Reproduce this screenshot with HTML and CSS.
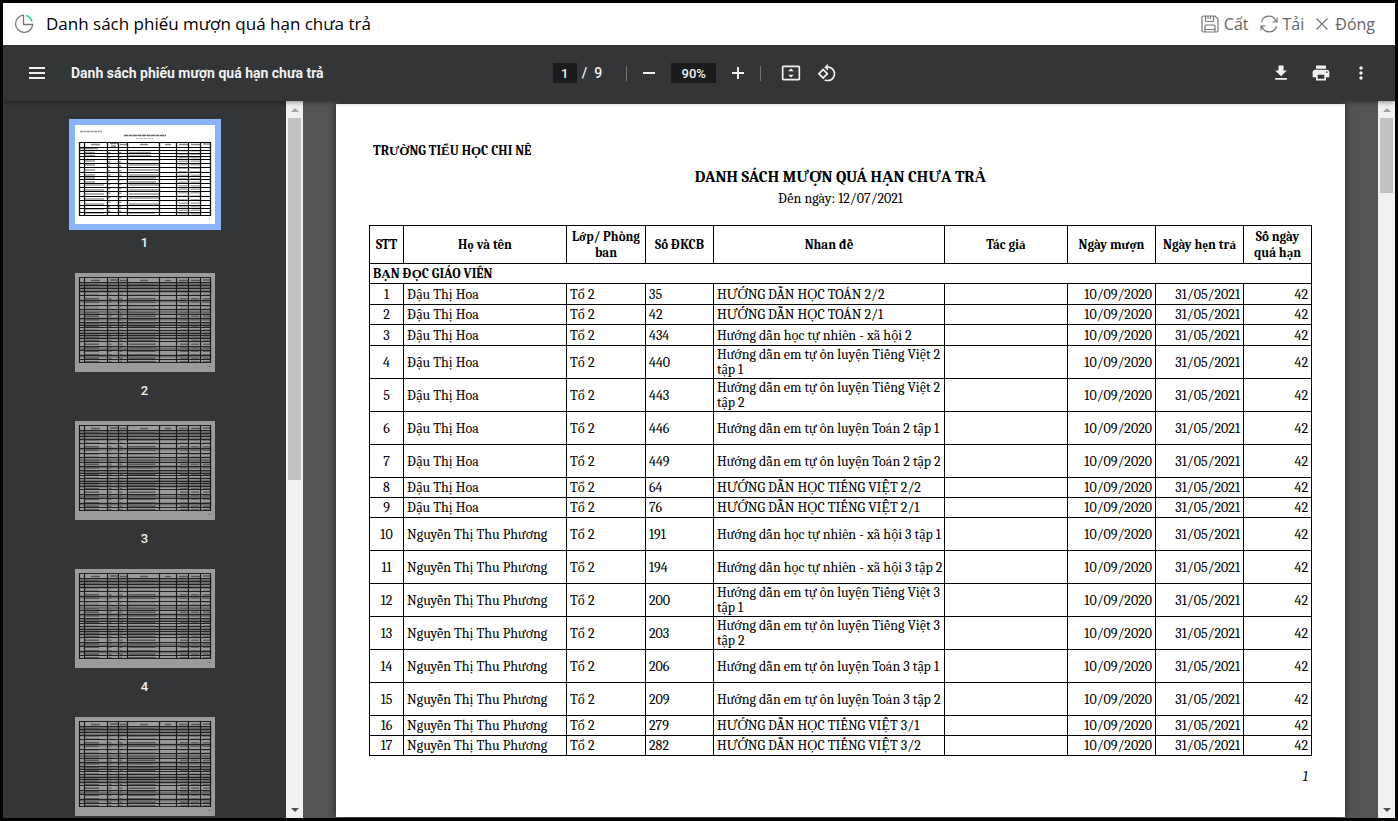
FILE: index.html
```
<!DOCTYPE html>
<html lang="vi">
<head>
    <meta charset="UTF-8">
    <meta name="viewport" content="width=device-width, initial-scale=1.0">
    <title>Danh sách phiếu mượn quá hạn chưa trả</title>
    <link rel="stylesheet" href="styles.css">
</head>
<body>
    <!-- shared page previews for the sidebar -->
    <svg class="defs" aria-hidden="true">
        <symbol id="preview-cols" viewBox="0 0 140 99">
            <path d="M4.500 17v74M9.500 17v74M32.500 17v74M43.500 17v74M52.500 17v74M84.500 17v74M101.500 17v74M113.500 17v74M125.500 17v74M135.500 17v74" stroke="#111" stroke-width="1.300"/>
        </symbol>
        <symbol id="preview-first" viewBox="0 0 140 99">
            <path d="M5 6.500h22" stroke="#999" stroke-width="1.500" stroke-dasharray="3 .5"/>
            <path d="M49 10.500h42" stroke="#666" stroke-width="1.500" stroke-dasharray="4 .5"/>
            <path d="M61 13.500h18" stroke="#bbb" stroke-dasharray="3 1"/>
            <path d="M16 19.500h9M35 18.500h8M36 21h5M45 19.500h7M65 19.500h8M90 19.500h6M104 19.500h9M116 19.500h10M128 19h7M5 23.500h18" stroke="#888" stroke-width="1.500"/>
            <path d="M10 27.500h10M10 30.500h10M10 36h10M10 40h10M10 45h10M10 50h10M10 53h10M10 57h10M10 60h19M10 65h19M10 69h19M10 74h19M10 79h19M10 84h19M10 88h19" stroke="#999" stroke-width="1.500"/>
            <path d="M34 27v63M45 27v63" stroke="#999" stroke-width="3" stroke-dasharray="1.500 3"/>
            <path d="M54 27.500h22M54 30.500h22M54 35h30M54 40h30M54 45h30M54 50h30M54 53h27M54 57h27M54 60h30M54 65h30M54 69h30M54 73h30M54 79h30M54 84h30M54 88h26" stroke="#999" stroke-width="1.600"/>
            <path d="M108 25v65M120 25v65" stroke="#aaa" stroke-width="9" stroke-dasharray="1.500 2"/>
            <path d="M4 17.500h132M4 22.500h132M4 25.500h132M4 28.500h132M4 31.500h132M4 34.500h132M4 38.500h132M4 42.500h132M4 47.500h132M4 51.500h132M4 54.500h132M4 58.500h132M4 62.500h132M4 66.500h132M4 71.500h132M4 75.500h132M4 80.500h132M4 83.500h132M4 87.500h132M4 90.500h132" stroke="#000"/>
            <rect x="134" y="93" width="1" height="1" fill="#888"/>
        </symbol>
        <symbol id="preview-next" viewBox="0 0 140 99">
            <path d="M4 11h132.500M4 14h132.500M4 18h132.500M4 28h132.500M4 39h132.500M4 46h132.500M4 51h132.500M4 60h132.500M4 65h132.500M4 76h132.500M4 83h132.500" stroke="#000" stroke-opacity=".35" stroke-width="3"/>
            <path d="M16 7.500h9M35 7h8M45 7.500h7M65 7.500h8M90 7.500h6M104 7.500h9M116 7.500h10M128 7h7" stroke="#777" stroke-width="1.500"/>
            <path d="M17 11v79" stroke="#777" stroke-width="14" stroke-dasharray="1.500 2"/>
            <path d="M35 11v79M46 11v79" stroke="#888" stroke-width="3" stroke-dasharray="1.500 2"/>
            <path d="M67 11v79" stroke="#777" stroke-width="27" stroke-dasharray="1.500 2"/>
            <path d="M109 11v79M120 11v79M132 11v79" stroke="#888" stroke-width="8" stroke-dasharray="1.500 2"/>
            <path d="M4 4.500h132M4 9.500h132M4 12.500h132M4 15.500h132M4 18.500h132M4 22.500h132M4 27.500h132M4 32.500h132M4 36.500h132M4 41.500h132M4 45.500h132M4 49.500h132M4 52.500h132M4 54.500h132M4 57.500h132M4 60.500h132M4 62.500h132M4 65.500h132M4 68.500h132M4 73.500h132M4 77.500h132M4 82.500h132M4 86.500h132M4 89.500h132" stroke="#111"/>
            <path d="M4.500 4v86M9.500 4v86M32.500 4v86M43.500 4v86M52.500 4v86M84.500 4v86M101.500 4v86M113.500 4v86M125.500 4v86M135.500 4v86" stroke="#000" stroke-width="1.200"/>
            <rect x="134" y="93" width="1" height="1" fill="#444"/>
        </symbol>
    </svg>

    <header class="titlebar">
        <svg class="report-icon" viewBox="0 0 20 20" width="20" height="20" fill="none" stroke-width="1.300">
            <path d="M9.500 1.200a8.600 8.600 0 1 0 9.200 9.300H9.500z" stroke="#777"/>
            <path d="M12 1.500a8 8 0 0 1 6 6" stroke="#2fd080" stroke-width="1.600"/>
        </svg>
        <h1>Danh sách phiếu mượn quá hạn chưa trả</h1>
        <div class="actions">
            <button type="button">
                <svg viewBox="0 0 18 18" width="18" height="18" fill="none" stroke="#777" stroke-width="1.200"><path d="M1 2.500Q1 1 2.500 1H14l3 3v11.500q0 1.500-1.500 1.500h-13Q1 17 1 15.500zM4.500 1v4.500q0 1 1 1h6q1 0 1-1V1M9.500 1v3M7 1v3M4 17v-6q0-1 1-1h8q1 0 1 1v6M4 14.500h10"/></svg>
                Cất
            </button>
            <button type="button">
                <svg viewBox="0 0 18 18" width="18" height="18" fill="none" stroke="#777" stroke-width="1.200"><path d="M1.500 7A7.500 7.500 0 0 1 16 6.500M17 2.500v4.500h-4.500M16.500 11A7.500 7.500 0 0 1 2 11.500M1 15.500V11h4.500"/></svg>
                Tải
            </button>
            <button type="button">
                <svg class="close-icon" viewBox="0 0 14 14" width="14" height="14" fill="none" stroke="#777" stroke-width="1.200"><path d="M1.500 1.500l11 11M12.500 1.500l-11 11"/></svg>
                Đóng
            </button>
        </div>
    </header>

    <div class="toolbar">
        <div class="toolbar-start">
            <button type="button" class="icon-btn" aria-label="Menu">
                <svg viewBox="0 0 20 20"><path d="M2 4h16v2H2zM2 9h16v2H2zM2 14h16v2H2z"/></svg>
            </button>
            <h2>Danh sách phiếu mượn quá hạn chưa trả</h2>
        </div>
        <div class="toolbar-center">
            <input class="page-input" type="text" value="1" aria-label="Trang">
            <span class="page-total">/&nbsp; 9</span>
            <span class="divider"></span>
            <button type="button" class="icon-btn" aria-label="Thu nhỏ">
                <svg viewBox="0 0 20 20"><path d="M4 9h12v2H4z"/></svg>
            </button>
            <input class="zoom-input" type="text" value="90%" aria-label="Thu phóng">
            <button type="button" class="icon-btn" aria-label="Phóng to">
                <svg viewBox="0 0 20 20"><path d="M9 4h2v5h5v2h-5v5H9v-5H4V9h5z"/></svg>
            </button>
            <span class="divider"></span>
            <button type="button" class="icon-btn fit" aria-label="Vừa với trang">
                <svg viewBox="0 0 24 24"><path d="M21 3H3c-1.100 0-2 .9-2 2v14c0 1.100.9 2 2 2h18c1.100 0 2-.9 2-2V5c0-1.100-.9-2-2-2zm0 16H3V5h18v14zM12 6.500L8.500 10h7L12 6.500zM12 17.500l3.500-3.500h-7l3.500 3.500z"/></svg>
            </button>
            <button type="button" class="icon-btn" aria-label="Xoay">
                <svg viewBox="0 0 24 24"><path d="M7.340 6.410L.86 12.900l6.490 6.480 6.490-6.480-6.500-6.490zM3.690 12.900l3.660-3.660L11 12.900l-3.660 3.660-3.650-3.660zm15.670-6.260C17.610 4.880 15.300 4 13 4V.76L8.760 5 13 9.240V6c1.790 0 3.580.68 4.950 2.050 2.730 2.730 2.730 7.170 0 9.900C16.580 19.320 14.790 20 13 20c-.97 0-1.940-.21-2.840-.61l-1.490 1.490C10.020 21.620 11.510 22 13 22c2.300 0 4.610-.88 6.360-2.640 3.520-3.510 3.520-9.210 0-12.720z"/></svg>
            </button>
        </div>
        <div class="toolbar-end">
            <button type="button" class="icon-btn" aria-label="Tải xuống">
                <svg viewBox="0 0 24 24"><path d="M19 9h-4V3H9v6H5l7 7 7-7zM5 18v2h14v-2H5z"/></svg>
            </button>
            <button type="button" class="icon-btn" aria-label="In">
                <svg viewBox="0 0 24 24"><path d="M19 8H5c-1.660 0-3 1.340-3 3v6h4v4h12v-4h4v-6c0-1.660-1.340-3-3-3zm-3 11H8v-5h8v5zm3-7c-.55 0-1-.45-1-1s.45-1 1-1 1 .45 1 1-.45 1-1 1zm-1-9H6v4h12V3z"/></svg>
            </button>
            <button type="button" class="icon-btn" aria-label="Thêm">
                <svg viewBox="0 0 24 24"><path d="M12 8c1.100 0 2-.9 2-2s-.9-2-2-2-2 .9-2 2 .9 2 2 2zm0 2c-1.100 0-2 .9-2 2s.9 2 2 2 2-.9 2-2-.9-2-2-2zm0 6c-1.100 0-2 .9-2 2s.9 2 2 2 2-.9 2-2-.9-2-2-2z"/></svg>
            </button>
        </div>
    </div>

    <div class="viewer">
        <nav class="thumbs">
            <a href="#p1" class="thumb active">
                <svg viewBox="0 0 140 99"><use href="#preview-first"/><use href="#preview-cols"/></svg>
                <span>1</span>
            </a>
            <a href="#p2" class="thumb">
                <svg viewBox="0 0 140 99"><use href="#preview-next"/></svg>
                <span>2</span>
            </a>
            <a href="#p3" class="thumb">
                <svg viewBox="0 0 140 99"><use href="#preview-next"/></svg>
                <span>3</span>
            </a>
            <a href="#p4" class="thumb">
                <svg viewBox="0 0 140 99"><use href="#preview-next"/></svg>
                <span>4</span>
            </a>
            <a href="#p5" class="thumb" aria-label="5">
                <svg viewBox="0 0 140 99"><use href="#preview-next"/></svg>
            </a>
        </nav>
        <div class="scrollbar">
            <span class="arrow up"></span>
            <span class="track"><span class="handle"></span></span>
            <span class="arrow down"></span>
        </div>

        <main class="canvas">
            <article class="page" id="p1">
                <p class="school">TRƯỜNG TIỂU HỌC CHI NÊ</p>
                <h3>DANH SÁCH MƯỢN QUÁ HẠN CHƯA TRẢ</h3>
                <p class="date">Đến ngày: 12/07/2021</p>
                <table>
                    <colgroup>
                        <col class="c-stt"><col class="c-name"><col class="c-class"><col class="c-code"><col class="c-title"><col class="c-author"><col class="c-date"><col class="c-date"><col class="c-days">
                    </colgroup>
                    <thead>
                        <tr><th>STT</th><th>Họ và tên</th><th>Lớp/ Phòng ban</th><th>Số ĐKCB</th><th>Nhan đề</th><th>Tác giả</th><th>Ngày mượn</th><th>Ngày hẹn trả</th><th>Số ngày quá hạn</th></tr>
                    </thead>
                    <tbody>
                        <tr class="group"><th colspan="9">BẠN ĐỌC GIÁO VIÊN</th></tr>
                        <tr class="mid"><td>1</td><td>Đậu Thị Hoa</td><td>Tổ 2</td><td>35</td><td>HƯỚNG DẪN HỌC TOÁN 2/2</td><td></td><td>10/09/2020</td><td>31/05/2021</td><td>42</td></tr>
                        <tr><td>2</td><td>Đậu Thị Hoa</td><td>Tổ 2</td><td>42</td><td>HƯỚNG DẪN HỌC TOÁN 2/1</td><td></td><td>10/09/2020</td><td>31/05/2021</td><td>42</td></tr>
                        <tr class="mid"><td>3</td><td>Đậu Thị Hoa</td><td>Tổ 2</td><td>434</td><td>Hướng dẫn học tự nhiên - xã hội 2</td><td></td><td>10/09/2020</td><td>31/05/2021</td><td>42</td></tr>
                        <tr class="tall"><td>4</td><td>Đậu Thị Hoa</td><td>Tổ 2</td><td>440</td><td>Hướng dẫn em tự ôn luyện Tiếng Việt 2<br>tập 1</td><td></td><td>10/09/2020</td><td>31/05/2021</td><td>42</td></tr>
                        <tr class="tall"><td>5</td><td>Đậu Thị Hoa</td><td>Tổ 2</td><td>443</td><td>Hướng dẫn em tự ôn luyện Tiếng Việt 2<br>tập 2</td><td></td><td>10/09/2020</td><td>31/05/2021</td><td>42</td></tr>
                        <tr class="tall"><td>6</td><td>Đậu Thị Hoa</td><td>Tổ 2</td><td>446</td><td>Hướng dẫn em tự ôn luyện Toán 2 tập 1</td><td></td><td>10/09/2020</td><td>31/05/2021</td><td>42</td></tr>
                        <tr class="tall"><td>7</td><td>Đậu Thị Hoa</td><td>Tổ 2</td><td>449</td><td>Hướng dẫn em tự ôn luyện Toán 2 tập 2</td><td></td><td>10/09/2020</td><td>31/05/2021</td><td>42</td></tr>
                        <tr><td>8</td><td>Đậu Thị Hoa</td><td>Tổ 2</td><td>64</td><td>HƯỚNG DẪN HỌC TIẾNG VIỆT 2/2</td><td></td><td>10/09/2020</td><td>31/05/2021</td><td>42</td></tr>
                        <tr><td>9</td><td>Đậu Thị Hoa</td><td>Tổ 2</td><td>76</td><td>HƯỚNG DẪN HỌC TIẾNG VIỆT 2/1</td><td></td><td>10/09/2020</td><td>31/05/2021</td><td>42</td></tr>
                        <tr class="tall"><td>10</td><td>Nguyễn Thị Thu Phương</td><td>Tổ 2</td><td>191</td><td>Hướng dẫn học tự nhiên - xã hội 3 tập 1</td><td></td><td>10/09/2020</td><td>31/05/2021</td><td>42</td></tr>
                        <tr class="tall"><td>11</td><td>Nguyễn Thị Thu Phương</td><td>Tổ 2</td><td>194</td><td>Hướng dẫn học tự nhiên - xã hội 3 tập 2</td><td></td><td>10/09/2020</td><td>31/05/2021</td><td>42</td></tr>
                        <tr class="tall"><td>12</td><td>Nguyễn Thị Thu Phương</td><td>Tổ 2</td><td>200</td><td>Hướng dẫn em tự ôn luyện Tiếng Việt 3<br>tập 1</td><td></td><td>10/09/2020</td><td>31/05/2021</td><td>42</td></tr>
                        <tr class="tall"><td>13</td><td>Nguyễn Thị Thu Phương</td><td>Tổ 2</td><td>203</td><td>Hướng dẫn em tự ôn luyện Tiếng Việt 3<br>tập 2</td><td></td><td>10/09/2020</td><td>31/05/2021</td><td>42</td></tr>
                        <tr class="tall"><td>14</td><td>Nguyễn Thị Thu Phương</td><td>Tổ 2</td><td>206</td><td>Hướng dẫn em tự ôn luyện Toán 3 tập 1</td><td></td><td>10/09/2020</td><td>31/05/2021</td><td>42</td></tr>
                        <tr class="tall"><td>15</td><td>Nguyễn Thị Thu Phương</td><td>Tổ 2</td><td>209</td><td>Hướng dẫn em tự ôn luyện Toán 3 tập 2</td><td></td><td>10/09/2020</td><td>31/05/2021</td><td>42</td></tr>
                        <tr><td>16</td><td>Nguyễn Thị Thu Phương</td><td>Tổ 2</td><td>279</td><td>HƯỚNG DẪN HỌC TIẾNG VIỆT 3/1</td><td></td><td>10/09/2020</td><td>31/05/2021</td><td>42</td></tr>
                        <tr><td>17</td><td>Nguyễn Thị Thu Phương</td><td>Tổ 2</td><td>282</td><td>HƯỚNG DẪN HỌC TIẾNG VIỆT 3/2</td><td></td><td>10/09/2020</td><td>31/05/2021</td><td>42</td></tr>
                    </tbody>
                </table>
                <p class="page-number">1</p>
            </article>
        </main>
        <div class="scrollbar main-scroll">
            <span class="arrow up"></span>
            <span class="track"><span class="handle"></span></span>
            <span class="arrow down"></span>
        </div>
    </div>
</body>
</html>
```

FILE: styles.css
```
* {
    margin: 0;
    padding: 0;
    box-sizing: border-box;
}

body {
    height: 100vh;
    display: flex;
    flex-direction: column;
    border: 3px solid #000;
    background: #fff;
    font-family: Roboto, sans-serif;
    overflow: hidden;
}

button {
    border: none;
    background: none;
    font: inherit;
    color: inherit;
    cursor: pointer;
}

.defs {
    width: 0;
    height: 0;
    position: absolute;
}

/* window title */
.titlebar {
    display: flex;
    align-items: center;
    height: 42px;
    flex: none;
    padding: 0 20px 0 11px;
    font-family: "Open Sans", sans-serif;
}

.titlebar h1 {
    margin-left: 12px;
    font-size: 17px;
    line-height: 22px;
    font-weight: 400;
    color: #000;
}

.actions {
    display: flex;
    gap: 11px;
    margin-left: auto;
    font-size: 16px;
    color: #666;
}

.actions button {
    display: flex;
    align-items: center;
    gap: 5px;
}

.close-icon {
    margin-right: 1px;
}

/* pdf toolbar */
.toolbar {
    display: grid;
    grid-template-columns: 1fr auto 1fr;
    align-items: center;
    height: 56px;
    flex: none;
    padding: 0 16px;
    background: #323639;
    color: #f1f1f1;
    font-size: 14px;
    font-weight: 500;
    box-shadow: 0 0 6px rgba(0, 0, 0, 0.6);
    clip-path: inset(0 0 -8px 0);
    z-index: 1;
}

.toolbar-start,
.toolbar-center,
.toolbar-end {
    display: flex;
    align-items: center;
}

.toolbar-start h2 {
    margin-left: 16px;
    font-size: 14px;
    font-weight: 700;
    white-space: nowrap;
}

.toolbar-end {
    justify-content: flex-end;
    gap: 4px;
}

.icon-btn {
    display: flex;
    align-items: center;
    justify-content: center;
    width: 36px;
    height: 36px;
}

.icon-btn svg {
    width: 20px;
    height: 20px;
    fill: #f1f1f1;
}

.page-input,
.zoom-input {
    height: 20px;
    border: none;
    background: #191b1c;
    color: #f1f1f1;
    font: 500 13px Roboto, sans-serif;
    text-align: center;
}

.page-input {
    width: 24px;
}

.zoom-input {
    width: 45px;
    margin: 0 4px;
}

.page-total {
    margin: 0 24px 0 5px;
}

.divider {
    width: 1px;
    height: 15px;
    background: #70757a;
}

.divider + .icon-btn {
    margin-left: 4px;
}

.icon-btn + .divider {
    margin-left: 4px;
}

.divider + .fit {
    margin-left: 12px;
}

/* thumbnails */
.viewer {
    display: flex;
    flex: 1;
    min-height: 0;
}

.thumbs {
    width: 283px;
    flex: none;
    padding-top: 24px;
    background: #323639;
    overflow: hidden;
}

.thumb {
    display: flex;
    flex-direction: column;
    align-items: center;
    color: #f1f1f1;
    font-size: 13px;
    font-weight: 500;
    line-height: 37px;
    padding-bottom: 12px;
    text-decoration: none;
}

.thumb svg {
    width: 140px;
    height: 99px;
    background: #fff;
    opacity: 0.5;
}

.thumb.active svg {
    opacity: 1;
    outline: 6px solid #8ab4f8;
}

/* scrollbars */
.scrollbar {
    width: 17px;
    flex: none;
    display: flex;
    flex-direction: column;
    align-items: center;
    background: #f1f1f1;
}

.arrow {
    display: flex;
    align-items: center;
    height: 17px;
}

.arrow::before {
    content: "";
    border: 4px solid transparent;
}

.arrow.up::before {
    border-top: none;
    border-bottom-color: #a3a3a3;
}

.arrow.down::before {
    border-bottom: none;
    border-top-color: #505050;
}

.track {
    flex: 1;
    width: 13px;
}

.handle {
    display: block;
    height: 53%;
    background: #c1c1c1;
}

.main-scroll .handle {
    height: 11%;
}

/* document */
.canvas {
    flex: 1;
    min-width: 0;
    padding: 3px 33px 1px;
    background: #525659;
    overflow: hidden;
}

.page {
    height: 100%;
    padding: 38px 33px 0;
    background: #fff;
    box-shadow: 0 0 8px rgba(0, 0, 0, 0.6);
    font-family: Cambria, "Liberation Serif", serif;
    font-size: 14px;
    line-height: 15px;
    color: #000;
}

.school {
    padding: 1px 4px;
    font-size: 13px;
    font-weight: 700;
}

.page h3 {
    margin-top: 8px;
    font-size: 16px;
    line-height: 20px;
    text-align: center;
}

.date {
    margin: 4px 0 19px;
    text-align: center;
}

table {
    width: 100%;
    table-layout: fixed;
    border-collapse: collapse;
}

.c-stt { width: 34px; }
.c-name { width: 163px; }
.c-class { width: 79px; }
.c-code { width: 68px; }
.c-title { width: 231px; }
.c-author { width: 123px; }
.c-date { width: 88px; }
.c-days { width: 68px; }

th,
td {
    padding: 0 3px;
    border: 1px solid #000;
    text-align: left;
    vertical-align: middle;
    white-space: nowrap;
}

thead tr {
    height: 38px;
}

thead th {
    padding: 0;
    font-size: 13px;
    line-height: 16px;
    text-align: center;
    white-space: normal;
}

.group th {
    font-size: 13px;
}

tbody tr {
    height: 20px;
}

tbody .mid {
    height: 21px;
}

tbody .tall {
    height: 33px;
}

td:first-child {
    text-align: center;
}

td:nth-child(n+7) {
    text-align: right;
}

.page-number {
    padding: 13px 4px 0;
    font-style: italic;
    text-align: right;
}
```
